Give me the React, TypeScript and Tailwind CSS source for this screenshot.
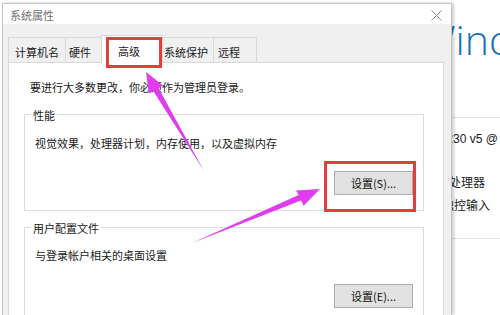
import React from 'react';

const Tab: React.FC<{ label: string; active?: boolean; className: string }> = ({ label, active, className }) => {
  return (
    <div
      className={`flex items-center pt-[4px] border border-b-0 border-[#d9d9d9] text-[11px] leading-[14px] text-[#1a1a1a] ${
        active ? 'relative z-10 h-[28px] -mb-px bg-white' : 'h-[25px] bg-[#f0f0f0]'
      } ${className}`}
    >
      {label}
    </div>
  );
};

const SettingsButton: React.FC<{ label: string }> = ({ label }) => {
  return (
    <div className="w-[79px] h-[24px] flex items-center justify-center bg-[#e1e1e1] border border-[#adadad] text-[11px] text-[#111]">
      {label}
    </div>
  );
};

const App: React.FC = () => {
  return (
    <div className="relative w-[500px] h-[315px] overflow-hidden bg-white flex font-['Noto_Sans_CJK_SC','Liberation_Sans',sans-serif]">
      {/* dialog window */}
      <div className="relative z-10 ml-[2px] mt-[3px] w-[450px] shrink-0 flex flex-col border border-b-0 border-[#c4c4c4] shadow-[2px_0_3px_rgba(0,0,0,0.2)]">
        {/* title bar */}
        <div className="h-[31px] bg-white flex items-center justify-between pl-[7px] pr-[9px] pt-[3px]">
          <span className="text-[11px] text-[#6f6f6f]">系统属性</span>
          <svg width="11" height="11" viewBox="0 0 11 11" className="block">
            <path d="M0.5 0.5 L10.5 10.5 M10.5 0.5 L0.5 10.5" stroke="#8a8a8a" strokeWidth="1" fill="none" />
          </svg>
        </div>

        {/* body */}
        <div className="flex-1 bg-[#f0f0f0] pl-[5px] pr-[7px] pt-[13px]">
          {/* tabs */}
          <div className="flex items-end h-[25px]">
            <Tab label="计算机名" className="w-[58px] pl-[6px]" />
            <Tab label="硬件" className="-ml-px w-[38px] pl-[3px]" />
            <Tab label="高级" active className="-ml-[2px] w-[62px] pl-[16px]" />
            <Tab label="系统保护" className="-ml-[2px] w-[53px] pl-[2px]" />
            <Tab label="远程" className="-ml-px w-[44px] pl-[4px]" />
          </div>

          {/* panel */}
          <div className="h-[260px] bg-white border border-b-0 border-[#d9d9d9] pt-[17px] text-[11px] leading-[14px] text-[#1a1a1a]">
            <p className="pl-[21px]">要进行大多数更改，你必须作为管理员登录。</p>

            <fieldset className="mt-[14px] ml-[15px] w-[400px] border border-[#dcdcdc] pb-[15px]">
              <legend className="ml-[6px] px-[2px]">性能</legend>
              <p className="mt-[14px] pl-[10px]">视觉效果，处理器计划，内存使用，以及虚拟内存</p>
              <div className="mt-[21px] flex justify-end pr-[10px]">
                <SettingsButton label="设置(S)..." />
              </div>
            </fieldset>

            <fieldset className="mt-[10px] ml-[15px] w-[400px] border border-[#dcdcdc] pb-[15px]">
              <legend className="ml-[6px] px-[2px]">用户配置文件</legend>
              <p className="mt-[13px] pl-[10px]">与登录帐户相关的桌面设置</p>
              <div className="mt-[22px] flex justify-end pr-[10px]">
                <SettingsButton label="设置(E)..." />
              </div>
            </fieldset>
          </div>
        </div>
      </div>

      {/* system window behind */}
      <div className="flex-1 overflow-hidden flex flex-col whitespace-nowrap">
        <div className="mt-[15px] -ml-[33px] text-[41px] leading-[48px] font-light text-[#1471be] font-['Open_Sans',sans-serif]">
          Windows 10
        </div>
        <div className="mt-[54px] border-t border-[#e3e3e3]" />
        <div className="mt-[13px] -ml-[31px] text-[12px] leading-[16px] text-[#222] font-['Liberation_Sans',sans-serif]">
          E3-1230 v5 @ 3.40GHz
        </div>
        <div className="mt-[27px] -ml-[3px] text-[12px] leading-[16px] text-[#222]">处理器</div>
        <div className="mt-[7px] -ml-[10px] text-[12px] leading-[16px] text-[#222]">触控输入</div>
        <div className="mt-[25px] border-t border-[#e3e3e3]" />
      </div>

      {/* annotations */}
      <svg className="absolute inset-0 z-20 pointer-events-none" width="500" height="315" viewBox="0 0 500 315">
        <rect x="107.5" y="38.5" width="53" height="28" fill="none" stroke="#e23f3a" strokeWidth="3" />
        <rect x="325.5" y="162.5" width="89" height="48" fill="none" stroke="#e23f3a" strokeWidth="3" />
        <polygon
          points="204,171 158.6,88.2 163,85.5 146,72 148.8,93.6 153.4,91.2"
          fill="#e23cf0"
        />
        <polygon
          points="192,243 301,200.6 303.6,205.8 320,189 296,190.6 298.6,195"
          fill="#e23cf0"
        />
      </svg>
    </div>
  );
};

export default App;
